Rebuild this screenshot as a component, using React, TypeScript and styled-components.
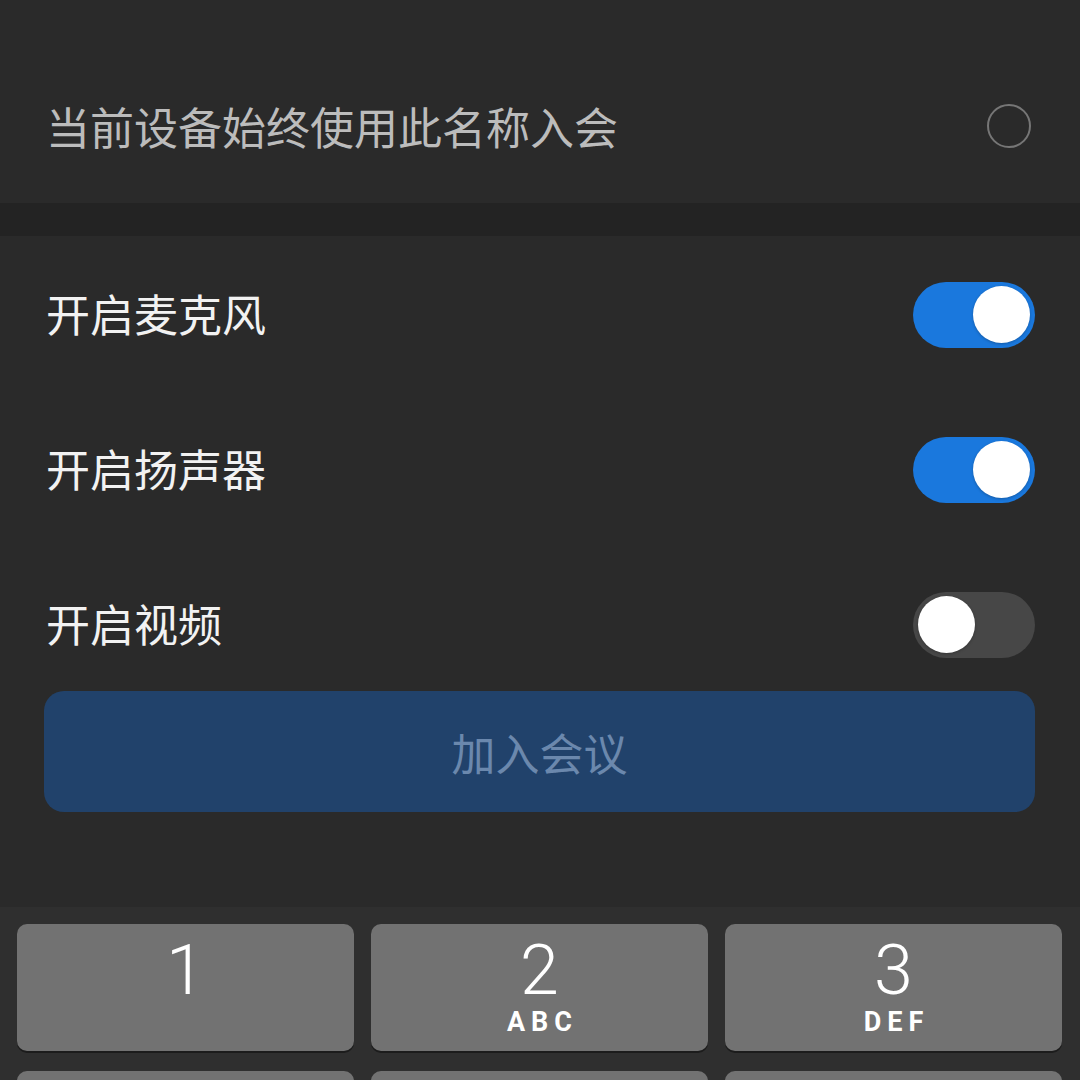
import React from 'react'
import styled, { createGlobalStyle } from 'styled-components'

const GlobalStyle = createGlobalStyle`
	html, body {
		margin: 0;
		padding: 0;
		background: #2a2a2a;
		overflow: hidden;
	}
	* {
		box-sizing: border-box;
	}
`

const Page = styled.div`
	width: 1080px;
	height: 1080px;
	display: flex;
	flex-direction: column;
	overflow: hidden;
	background: #2a2a2a;
	font-family: 'Noto Sans CJK SC', 'Noto Sans', sans-serif;
	& > * {
		flex-shrink: 0;
	}
`

const NameSection = styled.div`
	padding: 76px 49px 27px 46px;
`
const NameRow = styled.div`
	height: 100px;
	display: flex;
	align-items: center;
	justify-content: space-between;
`
const NameLabel = styled.span`
	font-size: 44px;
	color: #bcbcbc;
`
const Radio = styled.div`
	width: 44px;
	height: 44px;
	border-radius: 50%;
	border: 2.5px solid #767676;
`

const Band = styled.div`
	height: 33px;
	background: #232323;
`

const Options = styled.div`
	display: flex;
	flex-direction: column;
	gap: 22px;
	padding: 10px 45px 2px 46px;
`
const OptionRow = styled.div`
	height: 133px;
	display: flex;
	align-items: center;
	justify-content: space-between;
`
const OptionLabel = styled.span`
	font-size: 44px;
	color: #f2f2f2;
`
const Track = styled.div<{ on: boolean }>`
	width: 122px;
	height: 66px;
	margin-top: 4px;
	border-radius: 33px;
	padding: 0 5px;
	display: flex;
	align-items: center;
	justify-content: ${(p) => (p.on ? 'flex-end' : 'flex-start')};
	background: ${(p) => (p.on ? '#1a78dd' : '#474747')};
`
const Knob = styled.div`
	width: 57px;
	height: 57px;
	border-radius: 50%;
	background: #ffffff;
	box-shadow: 0 1px 3px rgba(0, 0, 0, 0.25);
`

const JoinButton = styled.button`
	margin: 0 45px 0 44px;
	height: 121px;
	border: none;
	border-radius: 20px;
	background: #21426b;
	color: #6b88ad;
	font-family: 'Noto Sans CJK SC', 'Noto Sans', sans-serif;
	font-size: 44px;
	display: flex;
	align-items: center;
	justify-content: center;
`

const Keyboard = styled.div`
	margin-top: 95px;
	height: 400px;
	background: #2f2f2f;
	padding: 17px 18px 0 17px;
	display: grid;
	grid-template-columns: repeat(3, 1fr);
	grid-auto-rows: 127px;
	align-content: start;
	column-gap: 17px;
	row-gap: 20px;
`
const Key = styled.div`
	border-radius: 10px;
	background: #727272;
	box-shadow: 0 2px 0 #1c1c1c;
	display: flex;
	flex-direction: column;
	align-items: center;
	padding-top: 11px;
	color: #ffffff;
`
const Digit = styled.span`
	font-family: Roboto, 'Noto Sans', sans-serif;
	font-weight: 300;
	font-size: 70px;
	line-height: 1;
`
const Letters = styled.span`
	margin-top: 4px;
	font-family: Roboto, 'Noto Sans', sans-serif;
	font-weight: 700;
	font-size: 27px;
	line-height: 1;
	letter-spacing: 6px;
	padding-left: 6px;
`

const options = [
	{ label: '开启麦克风', on: true },
	{ label: '开启扬声器', on: true },
	{ label: '开启视频', on: false },
]

const keys = [
	{ digit: '1', letters: '' },
	{ digit: '2', letters: 'ABC' },
	{ digit: '3', letters: 'DEF' },
]

// second row of the keypad is cut off by the bottom edge, only its top shows
const hiddenRow = ['4', '5', '6']

const App = () => (
	<Page>
		<GlobalStyle />
		<NameSection>
			<NameRow>
				<NameLabel>当前设备始终使用此名称入会</NameLabel>
				<Radio />
			</NameRow>
		</NameSection>
		<Band />
		<Options>
			{options.map((o) => (
				<OptionRow key={o.label}>
					<OptionLabel>{o.label}</OptionLabel>
					<Track on={o.on}>
						<Knob />
					</Track>
				</OptionRow>
			))}
		</Options>
		<JoinButton>加入会议</JoinButton>
		<Keyboard>
			{keys.map((k) => (
				<Key key={k.digit}>
					<Digit>{k.digit}</Digit>
					{k.letters && <Letters>{k.letters}</Letters>}
				</Key>
			))}
			{hiddenRow.map((id) => (
				<Key key={id} />
			))}
		</Keyboard>
	</Page>
)

export default App
